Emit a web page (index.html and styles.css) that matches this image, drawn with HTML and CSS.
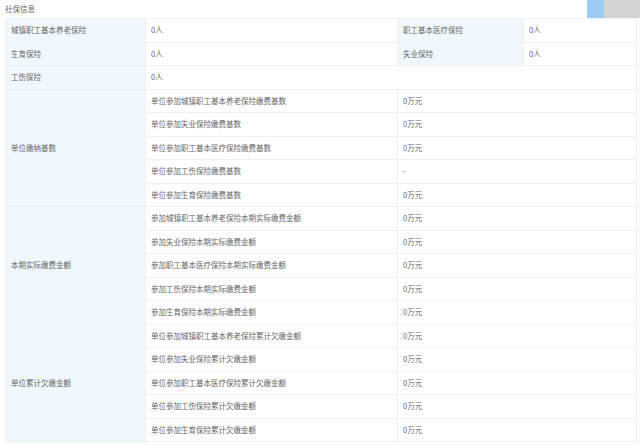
FILE: index.html
```html
<!DOCTYPE html>
<html lang="zh">
<head>
<meta charset="utf-8">
<title>社保信息</title>
<link rel="stylesheet" href="styles.css">
</head>
<body>
<div class="page">
  <div class="header">
    <span class="title">社保信息</span>
    <div class="tabs"><span class="tab-blue"></span><span class="tab-gray"></span></div>
  </div>
  <table class="info">
    <colgroup>
      <col class="c1"><col class="c2"><col class="c3"><col class="c4">
    </colgroup>
    <tr><td class="lbl">城镇职工基本养老保险</td><td>0人</td><td class="lbl">职工基本医疗保险</td><td>0人</td></tr>
    <tr><td class="lbl">生育保险</td><td>0人</td><td class="lbl">失业保险</td><td>0人</td></tr>
    <tr><td class="lbl">工伤保险</td><td colspan="3">0人</td></tr>

    <tr><td class="lbl" rowspan="5">单位缴纳基数</td><td>单位参加城镇职工基本养老保险缴费基数</td><td colspan="2">0万元</td></tr>
    <tr><td>单位参加失业保险缴费基数</td><td colspan="2">0万元</td></tr>
    <tr><td>单位参加职工基本医疗保险缴费基数</td><td colspan="2">0万元</td></tr>
    <tr><td>单位参加工伤保险缴费基数</td><td colspan="2">-</td></tr>
    <tr><td>单位参加生育保险缴费基数</td><td colspan="2">0万元</td></tr>

    <tr><td class="lbl" rowspan="5">本期实际缴费金额</td><td>参加城镇职工基本养老保险本期实际缴费金额</td><td colspan="2">0万元</td></tr>
    <tr><td>参加失业保险本期实际缴费金额</td><td colspan="2">0万元</td></tr>
    <tr><td>参加职工基本医疗保险本期实际缴费金额</td><td colspan="2">0万元</td></tr>
    <tr><td>参加工伤保险本期实际缴费金额</td><td colspan="2">0万元</td></tr>
    <tr><td>参加生育保险本期实际缴费金额</td><td colspan="2">0万元</td></tr>

    <tr><td class="lbl" rowspan="5">单位累计欠缴金额</td><td>单位参加城镇职工基本养老保险累计欠缴金额</td><td colspan="2">0万元</td></tr>
    <tr><td>单位参加失业保险累计欠缴金额</td><td colspan="2">0万元</td></tr>
    <tr><td>单位参加职工基本医疗保险累计欠缴金额</td><td colspan="2">0万元</td></tr>
    <tr><td>单位参加工伤保险累计欠缴金额</td><td colspan="2">0万元</td></tr>
    <tr><td>单位参加生育保险累计欠缴金额</td><td colspan="2">0万元</td></tr>
  </table>
</div>
</body>
</html>
```

FILE: styles.css
```css
html, body {
  margin: 0;
  padding: 0;
  background: #ffffff;
}
body {
  font-family: "Noto Sans CJK SC", "Noto Sans", sans-serif;
  font-size: 7.5px;
  color: #666666;
}
.page {
  width: 640px;
}
.header {
  height: 18px;
  display: flex;
  align-items: center;
  justify-content: space-between;
}
.title {
  padding-left: 5px;
  font-size: 7.5px;
  color: #666666;
  line-height: 16px;
}
.tabs {
  display: flex;
  height: 18px;
  align-self: flex-start;
}
.tab-blue {
  width: 17px;
  height: 18px;
  background: #9ccbf3;
}
.tab-gray {
  width: 36px;
  height: 18px;
  background: #d4d4d4;
}
.info {
  margin-left: 5px;
  width: 631px;
  border-collapse: collapse;
  table-layout: fixed;
}
.c1 { width: 140px; }
.c2 { width: 252px; }
.c3 { width: 126px; }
.c4 { width: 113px; }
.info td {
  height: 23.5px;
  box-sizing: border-box;
  padding: 0 0 0 5px;
  border: 1px solid #eef0f2;
  white-space: nowrap;
  overflow: hidden;
  vertical-align: middle;
  line-height: 10px;
}
.info td.lbl {
  background: #f1f8fd;
}
```
